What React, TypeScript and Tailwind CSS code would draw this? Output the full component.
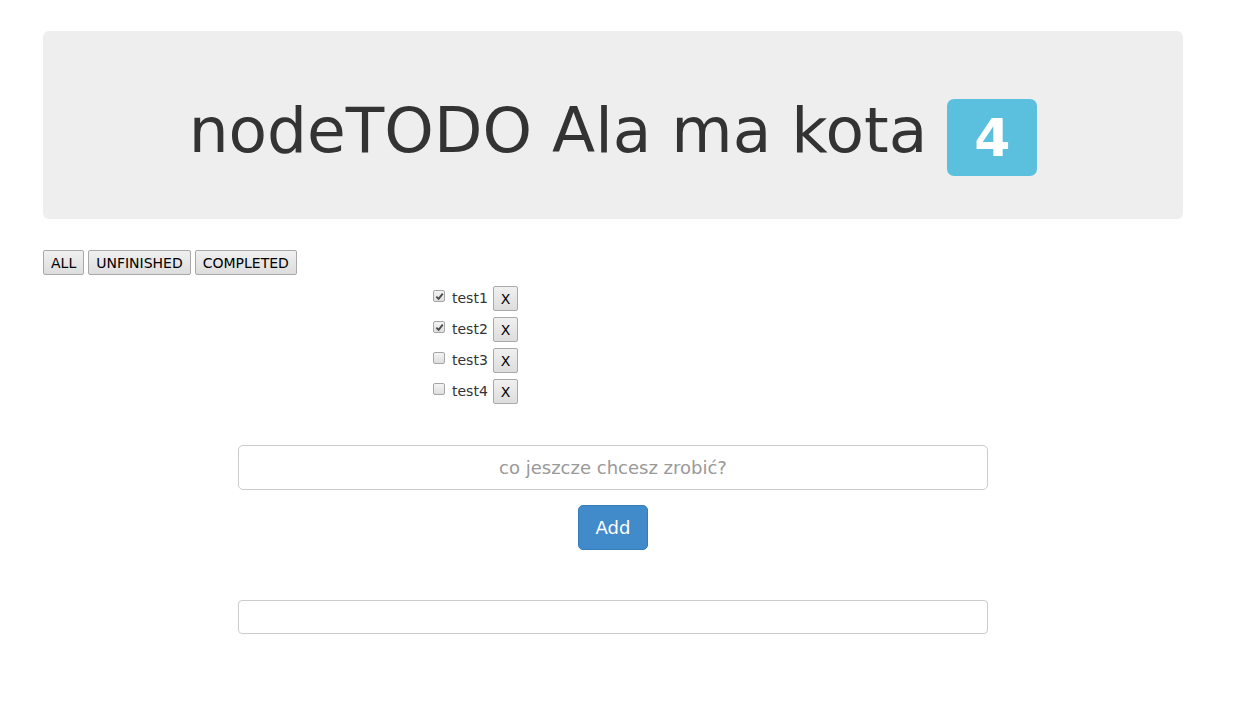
import { useState } from "react";

type Todo = { id: number; text: string; done: boolean };

const initialTodos: Todo[] = [
  { id: 1, text: "test1", done: true },
  { id: 2, text: "test2", done: true },
  { id: 3, text: "test3", done: false },
  { id: 4, text: "test4", done: false },
];

function Check({ checked, onToggle }: { checked: boolean; onToggle: () => void }) {
  return (
    <span
      onClick={onToggle}
      className="mb-[5px] mr-[7px] flex h-[12px] w-[12px] items-center justify-center rounded-[2px] border border-[#a6a6a6] bg-gradient-to-b from-[#f4f4f4] to-[#dedede]"
    >
      {checked && (
        <svg width="9" height="9" viewBox="0 0 10 10">
          <path d="M1.5 5.2 L4 7.6 L8.6 1.8" fill="none" stroke="#4a4a4a" strokeWidth="2" />
        </svg>
      )}
    </span>
  );
}

export default function App() {
  const [todos, setTodos] = useState<Todo[]>(initialTodos);
  const [text, setText] = useState("");

  const toggle = (id: number) =>
    setTodos(todos.map((t) => (t.id === id ? { ...t, done: !t.done } : t)));

  const remove = (id: number) => setTodos(todos.filter((t) => t.id !== id));

  const add = () => {
    if (!text) return;
    setTodos([...todos, { id: Date.now(), text: text, done: false }]);
    setText("");
  };

  const btn =
    "h-[25px] rounded-[2px] border border-[#a9a9a9] bg-gradient-to-b from-[#f0f0f0] to-[#dddddd] px-[7px] text-[14px] leading-none text-black";

  return (
    <div className="min-h-[727px] bg-white pt-[31px] font-['DejaVu_Sans',sans-serif] text-[#333333]">
      <div className="ml-[43px] h-[188px] w-[1140px] rounded-[6px] bg-[#eeeeee] pt-[61px]">
        <h1 className="flex items-center justify-center">
          <span className="mb-[14px] text-[63px] leading-[77px]">nodeTODO Ala ma kota</span>
          <span className="ml-[20px] flex h-[77px] w-[90px] items-center justify-center rounded-[7px] bg-[#5bc0de] text-[52px] font-bold leading-none text-white">
            {todos.length}
          </span>
        </h1>
      </div>

      <div className="ml-[43px] mt-[31px] flex gap-[4px]">
        <button className={btn}>ALL</button>
        <button className={btn}>UNFINISHED</button>
        <button className={btn}>COMPLETED</button>
      </div>

      <div className="ml-[433px] mt-[11px] flex flex-col gap-[6px]">
        {todos.map((t) => (
          <div key={t.id} className="flex items-center">
            <Check checked={t.done} onToggle={() => toggle(t.id)} />
            <span className="text-[14px]">{t.text}</span>
            <button onClick={() => remove(t.id)} className={btn + " ml-[5px] w-[25px] px-0"}>
              X
            </button>
          </div>
        ))}
      </div>

      <div className="ml-[238px] mt-[41px] flex w-[750px] flex-col items-center">
        <input
          value={text}
          onChange={(e) => setText(e.target.value)}
          placeholder="co jeszcze chcesz zrobić?"
          className="h-[45px] w-full rounded-[5px] border border-[#cccccc] bg-white px-4 text-center text-[18px] text-[#555555] outline-none placeholder:text-[#999999]"
        />
        <button
          onClick={add}
          className="mt-[15px] h-[45px] w-[70px] rounded-[5px] border border-[#357ebd] bg-[#428bca] text-[18px] text-white"
        >
          Add
        </button>
        <input className="mt-[50px] h-[34px] w-full rounded-[4px] border border-[#cccccc] bg-white px-3 text-[14px] outline-none" />
      </div>
    </div>
  );
}
